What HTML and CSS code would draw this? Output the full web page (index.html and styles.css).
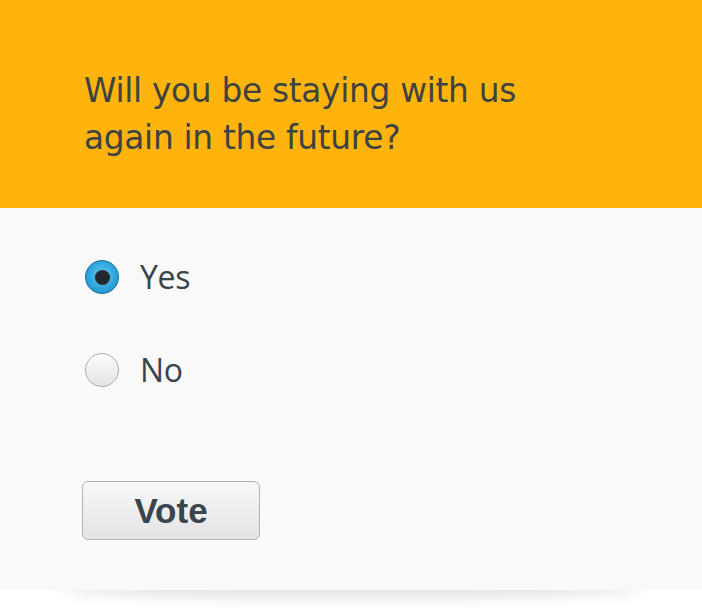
FILE: index.html
```html
<!DOCTYPE html>
<html>
<head>
<meta charset="utf-8">
<link rel="stylesheet" href="styles.css">
</head>
<body>
<div class="page">
  <div class="poll">
    <div class="poll-header">
      <h1 class="question">Will you be staying with us<br>again in the future?</h1>
    </div>
    <div class="poll-body">
      <label class="option">
        <span class="radio checked"><span class="dot"></span></span>
        <span class="label">Yes</span>
      </label>
      <label class="option">
        <span class="radio"></span>
        <span class="label">No</span>
      </label>
      <button class="vote">Vote</button>
    </div>
  </div>
</div>
</body>
</html>
```
FILE: styles.css
```css
html, body {
  margin: 0;
  padding: 0;
  background: #ffffff;
}
.page {
  width: 702px;
  height: 613px;
  overflow: hidden;
  position: relative;
  z-index: 0;
}
.poll {
  width: 702px;
  position: relative;
}
.poll::after {
  content: "";
  position: absolute;
  left: 60px;
  right: 60px;
  bottom: 2px;
  height: 20px;
  border-radius: 50%;
  box-shadow: 0 10px 14px rgba(0,0,0,0.12);
  z-index: -1;
}
.poll-header {
  background: #ffb30d;
  height: 208px;
  box-sizing: border-box;
  padding: 68px 0 0 84px;
}
.question {
  margin: 0;
  font-family: "DejaVu Sans", sans-serif;
  font-weight: normal;
  font-size: 32.8px;
  line-height: 47px;
  color: #3d4340;
  letter-spacing: -0.3px;
}
.poll-body {
  background: #f9f9f9;
  height: 382px;
  box-sizing: border-box;
  padding: 0 0 0 85px;
  display: flex;
  flex-direction: column;
  align-items: flex-start;
}
.option {
  display: flex;
  align-items: center;
  height: 34px;
  margin-top: 52px;
}
.option + .option {
  margin-top: 59px;
}
.radio {
  width: 34px;
  height: 34px;
  border-radius: 50%;
  box-sizing: border-box;
  border: 1px solid #acacac;
  background: linear-gradient(#fcfcfc, #e3e3e6);
  display: flex;
  align-items: center;
  justify-content: center;
  margin-right: 21px;
}
.radio.checked {
  border: 1px solid #1d6f99;
  background: radial-gradient(circle at 50% 45%, #6fc8ef 0%, #2ea5dd 55%, #1784c0 100%);
}
.dot {
  width: 15px;
  height: 15px;
  border-radius: 50%;
  background: #22292e;
  margin: 1px 0 0 1px;
}
.label {
  font-family: "Open Sans", sans-serif;
  font-size: 32px;
  color: #39434b;
  line-height: 34px;
  letter-spacing: -0.3px;
}
.vote {
  margin-top: 94px;
  margin-left: -3px;
  width: 178px;
  height: 59px;
  border: 1px solid #b3b3b6;
  border-radius: 6px;
  background: linear-gradient(#f7f7f8, #e4e4e6);
  font-family: "Liberation Sans", Arial, sans-serif;
  font-weight: bold;
  font-size: 35px;
  color: #39444c;
  padding: 0;
}
```
